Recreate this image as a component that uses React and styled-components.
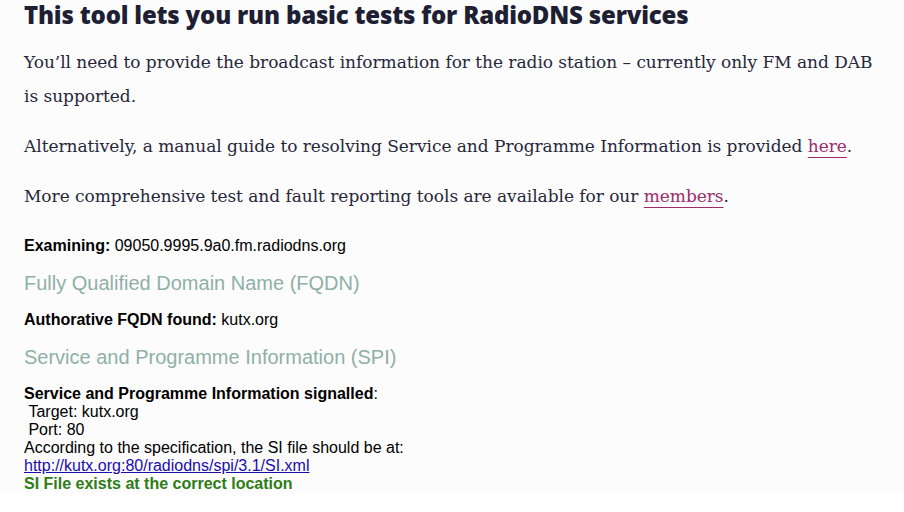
import React from "react";
import styled, { createGlobalStyle } from "styled-components";

const GlobalStyle = createGlobalStyle`
  html, body {
    margin: 0;
    padding: 0;
    background: #ffffff;
  }
`;

export default function App() {
  return (
    <>
      <GlobalStyle />
      <Page>
        <Title>This tool lets you run basic tests for RadioDNS services</Title>
        <Para>
          You’ll need to provide the broadcast information for the radio station – currently only FM and DAB is supported.
        </Para>
        <Para>
          Alternatively, a manual guide to resolving Service and Programme Information is provided <PinkLink href="#">here</PinkLink>.
        </Para>
        <Para>
          More comprehensive test and fault reporting tools are available for our <PinkLink href="#">members</PinkLink>.
        </Para>

        <Results>
          <Line>
            <b>Examining:</b> 09050.9995.9a0.fm.radiodns.org
          </Line>
          <SectionTitle>Fully Qualified Domain Name (FQDN)</SectionTitle>
          <Line>
            <b>Authorative FQDN found:</b> kutx.org
          </Line>
          <SectionTitle>Service and Programme Information (SPI)</SectionTitle>
          <Block>
            <b>Service and Programme Information signalled</b>:
            <br />
            &nbsp;Target: kutx.org
            <br />
            &nbsp;Port: 80
            <br />
            According to the specification, the SI file should be at:
            <br />
            <PlainLink href="#">http://kutx.org:80/radiodns/spi/3.1/SI.xml</PlainLink>
            <br />
            <Success>SI File exists at the correct location</Success>
          </Block>
        </Results>
      </Page>
    </>
  );
}

const Page = styled.div`
  background: #fcfcfd;
  padding: 0 24px;
  overflow: hidden;
`;

const Title = styled.h2`
  margin: 0 0 -1px 0;
  padding: 0;
  font-family: "Open Sans", "Noto Sans", sans-serif;
  font-weight: 800;
  font-size: 24px;
  line-height: 30px;
  letter-spacing: -0.2px;
  color: #1f1f33;
`;

const Para = styled.p`
  margin: 16px 0 0 0;
  font-family: "DejaVu Serif", "Liberation Serif", serif;
  font-size: 17px;
  line-height: 34px;
  letter-spacing: -0.04px;
  color: #27273a;
`;

const PinkLink = styled.a`
  color: #9c2a6c;
  text-decoration: underline;
  text-underline-offset: 5px;
  text-decoration-thickness: 1px;
`;

const Results = styled.div`
  margin-top: 24px;
  font-family: "Liberation Sans", Arial, sans-serif;
  font-size: 16px;
  line-height: 18px;
  color: #000000;
`;

const Line = styled.div`
  margin: 0;
`;

const SectionTitle = styled.h3`
  margin: 16px 0 16px 0;
  font-family: "Liberation Sans", Arial, sans-serif;
  font-weight: 400;
  font-size: 20px;
  line-height: 24px;
  color: #8fb0a6;
`;

const Block = styled.div`
  padding-top: 0;
`;

const PlainLink = styled.a`
  color: #1a0dab;
  text-decoration: underline;
`;

const Success = styled.b`
  color: #2e7d16;
`;
